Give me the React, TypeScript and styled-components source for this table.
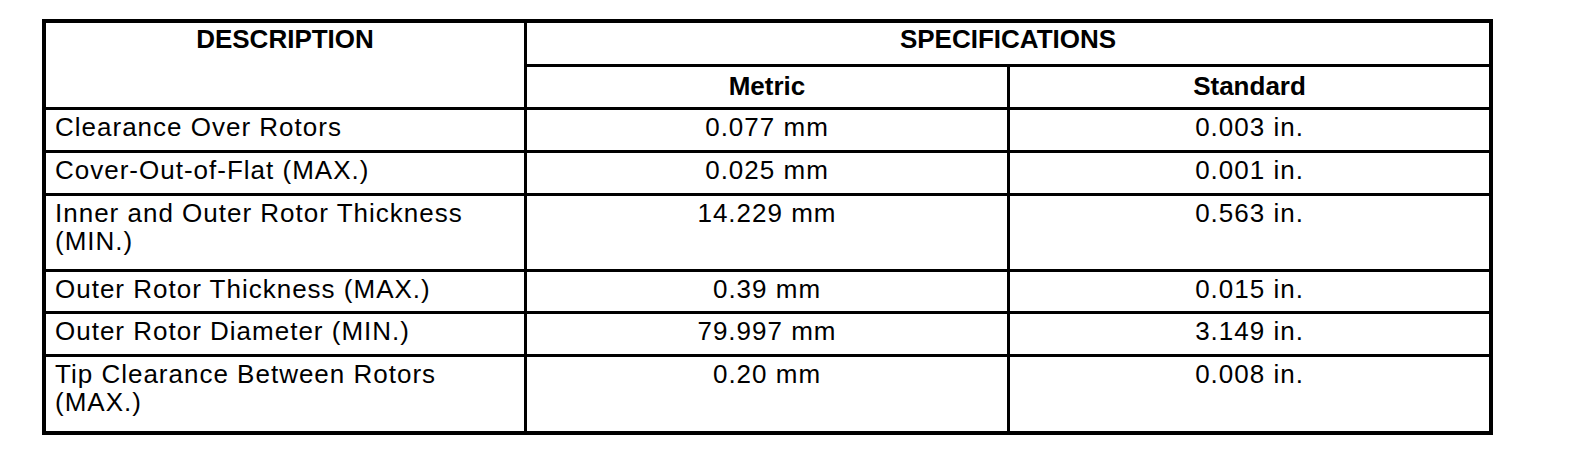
import React from 'react';
import styled, { createGlobalStyle } from 'styled-components';

const GlobalStyle = createGlobalStyle`
  html, body {
    margin: 0;
    padding: 0;
    background: #fff;
  }
`;

const Page = styled.main`
  width: 1584px;
  height: 450px;
  padding: 19px 0 0 42px;
  box-sizing: border-box;
  background: #fff;
  font-family: "Liberation Sans", Arial, Helvetica, sans-serif;
  color: #000;
`;

// the black background shows through the gaps as the ruling lines
const SpecTable = styled.div`
  display: grid;
  grid-template-columns: 478px 480px 479px;
  grid-template-rows: 41px 40px 40px 40px 73px 39px 40px 74px;
  gap: 3px;
  width: max-content;
  background: #000;
  border: 4px solid #000;
`;

const HeadCell = styled.div<{ $rows?: number; $cols?: number; $top?: number }>`
  background: #fff;
  grid-row: span ${(p) => p.$rows ?? 1};
  grid-column: span ${(p) => p.$cols ?? 1};
  padding-top: ${(p) => p.$top ?? 2}px;
  font-size: 26px;
  line-height: 28px;
  font-weight: 700;
  text-align: center;
`;

const DataCell = styled.div<{ $align?: 'left' | 'center' }>`
  background: #fff;
  padding: 3px 9px 0;
  font-size: 26px;
  line-height: 28px;
  letter-spacing: 1px;
  text-align: ${(p) => p.$align ?? 'center'};
`;

const rows = [
  { desc: 'Clearance Over Rotors', metric: '0.077 mm', std: '0.003 in.' },
  { desc: 'Cover-Out-of-Flat (MAX.)', metric: '0.025 mm', std: '0.001 in.' },
  { desc: 'Inner and Outer Rotor Thickness (MIN.)', metric: '14.229 mm', std: '0.563 in.' },
  { desc: 'Outer Rotor Thickness (MAX.)', metric: '0.39 mm', std: '0.015 in.' },
  { desc: 'Outer Rotor Diameter (MIN.)', metric: '79.997 mm', std: '3.149 in.' },
  { desc: 'Tip Clearance Between Rotors (MAX.)', metric: '0.20 mm', std: '0.008 in.' },
];

export default function App() {
  return (
    <Page>
      <GlobalStyle />
      <SpecTable>
        <HeadCell $rows={2}>DESCRIPTION</HeadCell>
        <HeadCell $cols={2}>SPECIFICATIONS</HeadCell>
        <HeadCell $top={5}>Metric</HeadCell>
        <HeadCell $top={5}>Standard</HeadCell>
        {rows.map((r) => (
          <React.Fragment key={r.desc}>
            <DataCell $align="left">{r.desc}</DataCell>
            <DataCell>{r.metric}</DataCell>
            <DataCell>{r.std}</DataCell>
          </React.Fragment>
        ))}
      </SpecTable>
    </Page>
  );
}
